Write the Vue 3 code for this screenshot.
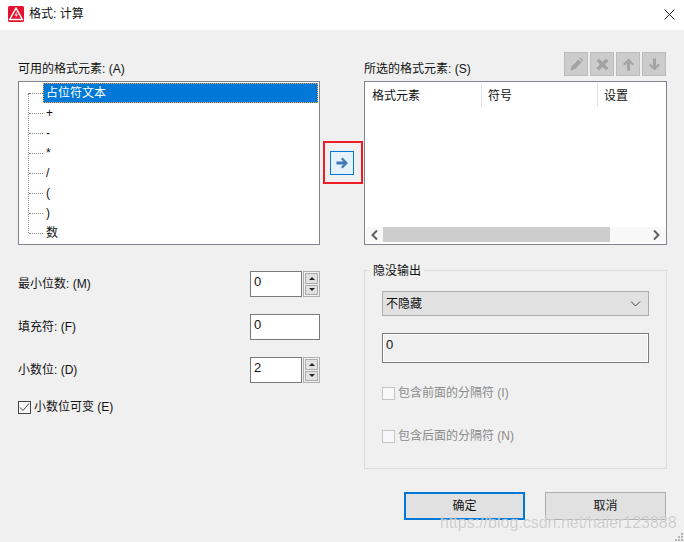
<script setup>
const rows = ['占位符文本', '+', '-', '*', '/', '(', ')', '数']
const columns = [
  { label: '格式元素', width: 117 },
  { label: '符号', width: 116 },
  { label: '设置', width: 68 },
]
const tools = [
  { id: 'edit', d: 'M2.500 14.500l1-4 7-7 3 3-7 7zM11.500 2.500l1-1 3 3-1 1z' },
  { id: 'del', d: 'M2.500 5l2.500-2.500 3.500 3.500 3.500-3.500 2.500 2.500-3.500 3.500 3.500 3.500-2.500 2.500-3.500-3.500-3.500 3.500-2.500-2.500 3.500-3.500z' },
  { id: 'up', d: 'M8.500 2.500l5.500 5.500-1.500 1.500-2.500-2.500v7.500h-3v-7.500l-2.500 2.500L3 8z' },
  { id: 'down', d: 'M8.500 14.500l5.500-5.500-1.500-1.500-2.500 2.500v-7.500h-3v7.500l-2.500-2.500L3 9z' },
]
</script>

<template>
  <div class="dialog">
    <header class="titlebar">
      <svg class="logo" width="16" height="16" viewBox="0 0 16 16">
        <rect width="16" height="16" rx="1.500" fill="#e8112d" />
        <path d="M8 2.200L14.300 13.500H1.700Z" fill="none" stroke="#fff" stroke-width="1.500" />
        <path d="M8.800 5.500L6.600 9.500H8.300L7.300 12L10 8.500H8.300Z" fill="#fff" />
      </svg>
      <span class="title">格式: 计算</span>
      <svg class="close" width="11" height="11" viewBox="0 0 11 11">
        <path d="M0.500 0.500L10.500 10.500M10.500 0.500L0.500 10.500" stroke="#222" stroke-width="1" fill="none" />
      </svg>
    </header>

    <main class="content">
      <section class="top">
        <div class="col">
          <div class="col-head"><label>可用的格式元素: (A)</label></div>
          <div class="box tree">
            <div class="tree-line"></div>
            <div v-for="(r, i) in rows" :key="r" class="tree-row" :class="{ first: i === 0 }">
              <span class="tree-text">{{ r }}</span>
            </div>
          </div>
        </div>

        <div class="mid">
          <button class="arrow-btn">
            <svg width="16" height="16" viewBox="0 0 16 16">
              <path d="M8.500 2.500L14 8L8.500 13.500L7 12L9.500 9.500H2.500V6.500H9.500L7 4Z" fill="#3f7ab5" />
            </svg>
            <span class="annot"></span>
          </button>
        </div>

        <div class="col">
          <div class="col-head">
            <label>所选的格式元素: (S)</label>
            <div class="tools">
              <span v-for="t in tools" :key="t.id" class="tool">
                <svg width="17" height="17" viewBox="0 0 17 17"><path :d="t.d" fill="#a3a3a3" /></svg>
              </span>
            </div>
          </div>
          <div class="box table">
            <div class="thead">
              <div v-for="c in columns" :key="c.label" class="th" :style="{ width: c.width + 'px' }">{{ c.label }}</div>
            </div>
            <div class="hscroll">
              <svg width="8" height="10" viewBox="0 0 8 10"><path d="M6 0.500L1.500 5L6 9.500" fill="none" stroke="#606060" stroke-width="2" /></svg>
              <div class="track"><div class="thumb"></div></div>
              <svg width="8" height="10" viewBox="0 0 8 10"><path d="M2 0.500L6.500 5L2 9.500" fill="none" stroke="#606060" stroke-width="2" /></svg>
            </div>
          </div>
        </div>
      </section>

      <section class="bottom">
        <div class="form">
          <div class="field">
            <label>最小位数: (M)</label>
            <div class="spin">
              <div class="input short">0</div>
              <div class="spinner">
                <span class="spin-b"><i class="tri up"></i></span>
                <span class="spin-b"><i class="tri down"></i></span>
              </div>
            </div>
          </div>
          <div class="field">
            <label>填充符: (F)</label>
            <div class="input wide">0</div>
          </div>
          <div class="field">
            <label>小数位: (D)</label>
            <div class="spin">
              <div class="input short">2</div>
              <div class="spinner">
                <span class="spin-b"><i class="tri up"></i></span>
                <span class="spin-b"><i class="tri down"></i></span>
              </div>
            </div>
          </div>
          <div class="check-row">
            <span class="check on">
              <svg width="11" height="11" viewBox="0 0 11 11"><path d="M1 5.500L4 8.500L10 1.500" fill="none" stroke="#444" stroke-width="1" /></svg>
            </span>
            <span>小数位可变 (E)</span>
          </div>
        </div>

        <div class="side">
          <div class="group">
            <span class="legend">隐没输出</span>
            <div class="select">
              <span>不隐藏</span>
              <svg width="11" height="6" viewBox="0 0 11 6"><path d="M1 0.500L5.500 5L10 0.500" fill="none" stroke="#444" stroke-width="1" /></svg>
            </div>
            <div class="readonly">0</div>
            <div class="dis-check"><span class="check off"></span><span>包含前面的分隔符 (I)</span></div>
            <div class="dis-check"><span class="check off"></span><span>包含后面的分隔符 (N)</span></div>
          </div>
          <div class="actions">
            <button class="btn primary">确定</button>
            <button class="btn">取消</button>
          </div>
        </div>
      </section>
    </main>

    <span class="watermark">https://blog.csdn.net/haier123888</span>
    <svg class="grip" width="9" height="9" viewBox="0 0 9 9">
      <path d="M6 0h2v2H6zM3 3h2v2H3zM6 3h2v2H6zM0 6h2v2H0zM3 6h2v2H3zM6 6h2v2H6z" fill="#b5b5b5" />
    </svg>
  </div>
</template>

<style scoped>
.dialog {
  position: relative;
  width: 684px;
  height: 542px;
  overflow: hidden;
  background: #f0f0f0;
  color: #111;
  font: 12px/16px "Liberation Sans", "Noto Sans CJK SC", sans-serif;
}
.titlebar {
  display: flex;
  align-items: center;
  height: 30px;
  padding: 0 9px 2px 8px;
  box-sizing: border-box;
  background: #fff;
}
.title { margin-left: 5px; }
.close { margin-left: auto; }
.content { padding: 22px 17px 0 18px; }
.top { display: flex; height: 193px; }
.col { width: 302px; display: flex; flex-direction: column; }
.col + .mid + .col { width: 303px; }
.col-head {
  height: 29px;
  display: flex;
  align-items: flex-end;
  justify-content: space-between;
  padding-bottom: 5px;
  box-sizing: border-box;
  position: relative;
}
.col-head label { position: relative; top: 1px; }
.tools { display: flex; gap: 2px; align-self: flex-start; margin-right: 1px; }
.tool {
  width: 24px;
  height: 24px;
  box-sizing: border-box;
  border: 1px solid #bcbcbc;
  background: #cccccc;
  display: flex;
  align-items: center;
  justify-content: center;
}
.box {
  height: 164px;
  box-sizing: border-box;
  border: 1px solid #82828c;
  background: #fff;
  position: relative;
}
.tree { padding: 1px 1px 0 0; }
.tree-line {
  position: absolute;
  left: 9px;
  top: 11px;
  height: 140px;
  border-left: 1px dotted #8a8a8a;
}
.tree-row {
  position: relative;
  height: 20px;
  padding-left: 24px;
  display: flex;
}
.tree-row::before {
  content: "";
  position: absolute;
  left: 10px;
  top: 10px;
  width: 14px;
  border-top: 1px dotted #8a8a8a;
}
.tree-text { flex: 1; padding-left: 3px; line-height: 21px; }
.first .tree-text {
  background: #0078d7;
  color: #fff;
  outline: 1px dotted #f0a040;
  outline-offset: -1px;
}
.mid {
  width: 44px;
  display: flex;
  justify-content: center;
  padding-top: 99px;
  box-sizing: border-box;
}
.arrow-btn {
  position: relative;
  width: 24px;
  height: 24px;
  padding: 0;
  border: 1px solid #0078d7;
  background: #e5f1fb;
  display: flex;
  align-items: center;
  justify-content: center;
}
.annot {
  position: absolute;
  left: -8px;
  top: -11px;
  width: 40px;
  height: 43px;
  box-sizing: border-box;
  border: 2px solid #ee1c25;
}
.table { display: flex; flex-direction: column; justify-content: space-between; }
.thead { display: flex; height: 25px; padding-top: 1px; box-sizing: border-box; }
.th {
  box-sizing: border-box;
  padding: 5px 0 0 7px;
  border-right: 1px solid #e3e3e3;
}
.th:last-child { border-right: 0; padding-left: 6px; }
.th:nth-child(2) { padding-left: 6px; }
.hscroll {
  height: 15px;
  margin: 0 1px 2px;
  display: flex;
  align-items: center;
  gap: 0;
  padding: 0 5px;
  background: #f8f8f8;
}
.track { flex: 1; height: 15px; padding: 0 42px 0 4px; }
.thumb { height: 15px; background: #cdcdcd; }
.bottom { display: flex; margin-top: 25px; }
.form { width: 302px; padding-top: 1px; margin-right: 44px; }
.field {
  display: flex;
  align-items: center;
  justify-content: space-between;
  height: 26px;
  margin-bottom: 17px;
}
.spin { display: flex; gap: 1px; }
.input {
  height: 26px;
  box-sizing: border-box;
  border: 1px solid #7a7a7a;
  background: #fff;
  padding: 2px 3px;
  font-size: 13px;
}
.short { width: 52px; }
.wide { width: 70px; }
.spinner {
  width: 17px;
  height: 26px;
  box-sizing: border-box;
  border: 1px solid #b0b0b0;
  display: flex;
  flex-direction: column;
  gap: 1px;
  padding: 1px;
}
.spin-b {
  flex: 1;
  background: #e1e1e1;
  border: 1px solid #adadad;
  display: flex;
  align-items: center;
  justify-content: center;
}
.tri { width: 0; height: 0; border-left: 3px solid transparent; border-right: 3px solid transparent; }
.tri.up { border-bottom: 3px solid #222; }
.tri.down { border-top: 3px solid #222; }
.check-row {
  display: flex;
  align-items: center;
  gap: 3px;
  margin-top: 6px;
  height: 14px;
}
.check {
  width: 13px;
  height: 13px;
  box-sizing: border-box;
  display: flex;
  align-items: center;
  justify-content: center;
  flex: none;
}
.check.on { border: 1px solid #444; background: #f8f8f8; }
.check.off { border: 1px solid #c4c4c4; background: #f8f8f8; }
.side { width: 303px; }
.group {
  position: relative;
  height: 199px;
  box-sizing: border-box;
  border: 1px solid #dcdcdc;
  padding: 20px 17px 0;
}
.legend {
  position: absolute;
  top: -8px;
  left: 5px;
  padding: 0 3px;
  background: #f0f0f0;
}
.select {
  height: 25px;
  box-sizing: border-box;
  border: 1px solid #adadad;
  background: #e1e1e1;
  display: flex;
  align-items: center;
  justify-content: space-between;
  padding: 0 3px;
}
.select svg { margin-right: 4px; }
.readonly {
  height: 30px;
  box-sizing: border-box;
  margin-top: 17px;
  border: 1px solid #7a7a7a;
  box-shadow: inset 0 0 0 1px #fff;
  padding: 3px;
  font-size: 13px;
  background: #f0f0f0;
}
.dis-check {
  display: flex;
  align-items: center;
  gap: 3px;
  height: 14px;
  color: #8a8a8a;
  margin-top: 23px;
}
.dis-check + .dis-check { margin-top: 29px; }
.actions {
  display: flex;
  justify-content: flex-end;
  gap: 20px;
  margin: 23px 1px 0 0;
}
.btn {
  width: 121px;
  height: 28px;
  box-sizing: border-box;
  border: 1px solid #adadad;
  background: #e1e1e1;
  color: #111;
  font: inherit;
  padding: 0;
}
.btn.primary { border: 2px solid #0078d7; }
.watermark {
  position: absolute;
  left: 440px;
  top: 513px;
  font-size: 16px;
  line-height: 20px;
  color: rgba(190, 190, 190, 0.75);
  text-shadow: 0 0 1px rgba(255, 255, 255, 0.8);
  white-space: nowrap;
}
.grip { position: absolute; right: 0; bottom: 0; }
</style>
